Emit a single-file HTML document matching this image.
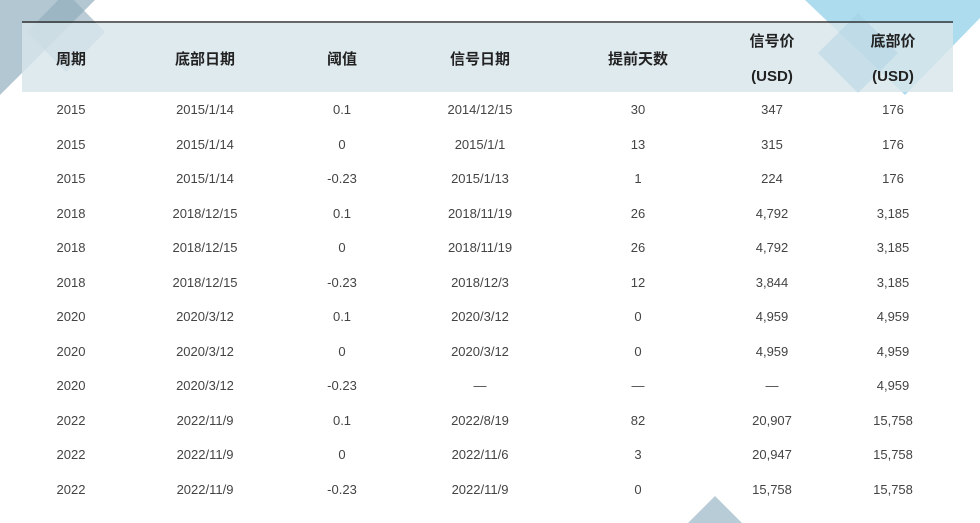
<!DOCTYPE html>
<html><head><meta charset="utf-8"><style>
body{margin:0;width:980px;height:523px;background:#fff;position:relative;overflow:hidden;font-family:"Liberation Sans","Noto Sans CJK SC",sans-serif;color:#444}
svg{position:absolute;left:0;top:0}
.c{position:absolute;transform:translateX(-50%);white-space:nowrap;font-size:13px}
.h{position:absolute;transform:translateX(-50%);white-space:nowrap;font-size:15px;font-weight:bold;color:#222;text-align:center}
</style></head><body>
<svg width="980" height="523">
<polygon points="0,0 95,0 0,95" fill="#b3c7d2"/>
<polygon points="27,32 66,-8 105,32 66,72" fill="#8eaabb" opacity="0.6"/>
<polygon points="805,0 980,0 980,18 905,95" fill="#acdcee"/>
<rect x="22" y="23" width="931" height="69" fill="#d8e5eb" opacity="0.82"/>
<polygon points="818,53 858,13 898,53 858,93" fill="#9dcbe0" opacity="0.35"/>
<polygon points="688,523 715,496 742,523" fill="#b7ccd6"/>
<line x1="22" y1="22" x2="953" y2="22" stroke="#333" stroke-width="1.5"/>
</svg>
<div class="h" style="left:71px;top:48px">周期</div>
<div class="h" style="left:205px;top:48px">底部日期</div>
<div class="h" style="left:342px;top:48px">阈值</div>
<div class="h" style="left:480px;top:48px">信号日期</div>
<div class="h" style="left:638px;top:48px">提前天数</div>
<div class="h" style="left:772px;top:24px;line-height:35px">信号价<br>(USD)</div>
<div class="h" style="left:893px;top:24px;line-height:35px">底部价<br>(USD)</div>
<div id="rows"></div>
<script>
var d=[["2015","2015/1/14","0.1","2014/12/15","30","347","176"],["2015","2015/1/14","0","2015/1/1","13","315","176"],["2015","2015/1/14","-0.23","2015/1/13","1","224","176"],["2018","2018/12/15","0.1","2018/11/19","26","4,792","3,185"],["2018","2018/12/15","0","2018/11/19","26","4,792","3,185"],["2018","2018/12/15","-0.23","2018/12/3","12","3,844","3,185"],["2020","2020/3/12","0.1","2020/3/12","0","4,959","4,959"],["2020","2020/3/12","0","2020/3/12","0","4,959","4,959"],["2020","2020/3/12","-0.23","—","—","—","4,959"],["2022","2022/11/9","0.1","2022/8/19","82","20,907","15,758"],["2022","2022/11/9","0","2022/11/6","3","20,947","15,758"],["2022","2022/11/9","-0.23","2022/11/9","0","15,758","15,758"]];
var x=[71,205,342,480,638,772,893],h="";
d.forEach(function(r,i){r.forEach(function(v,j){h+='<div class="c" style="left:'+x[j]+'px;top:'+(102+i*34.5)+'px">'+v+'</div>';});});
document.getElementById("rows").innerHTML=h;
</script>
</body></html>
